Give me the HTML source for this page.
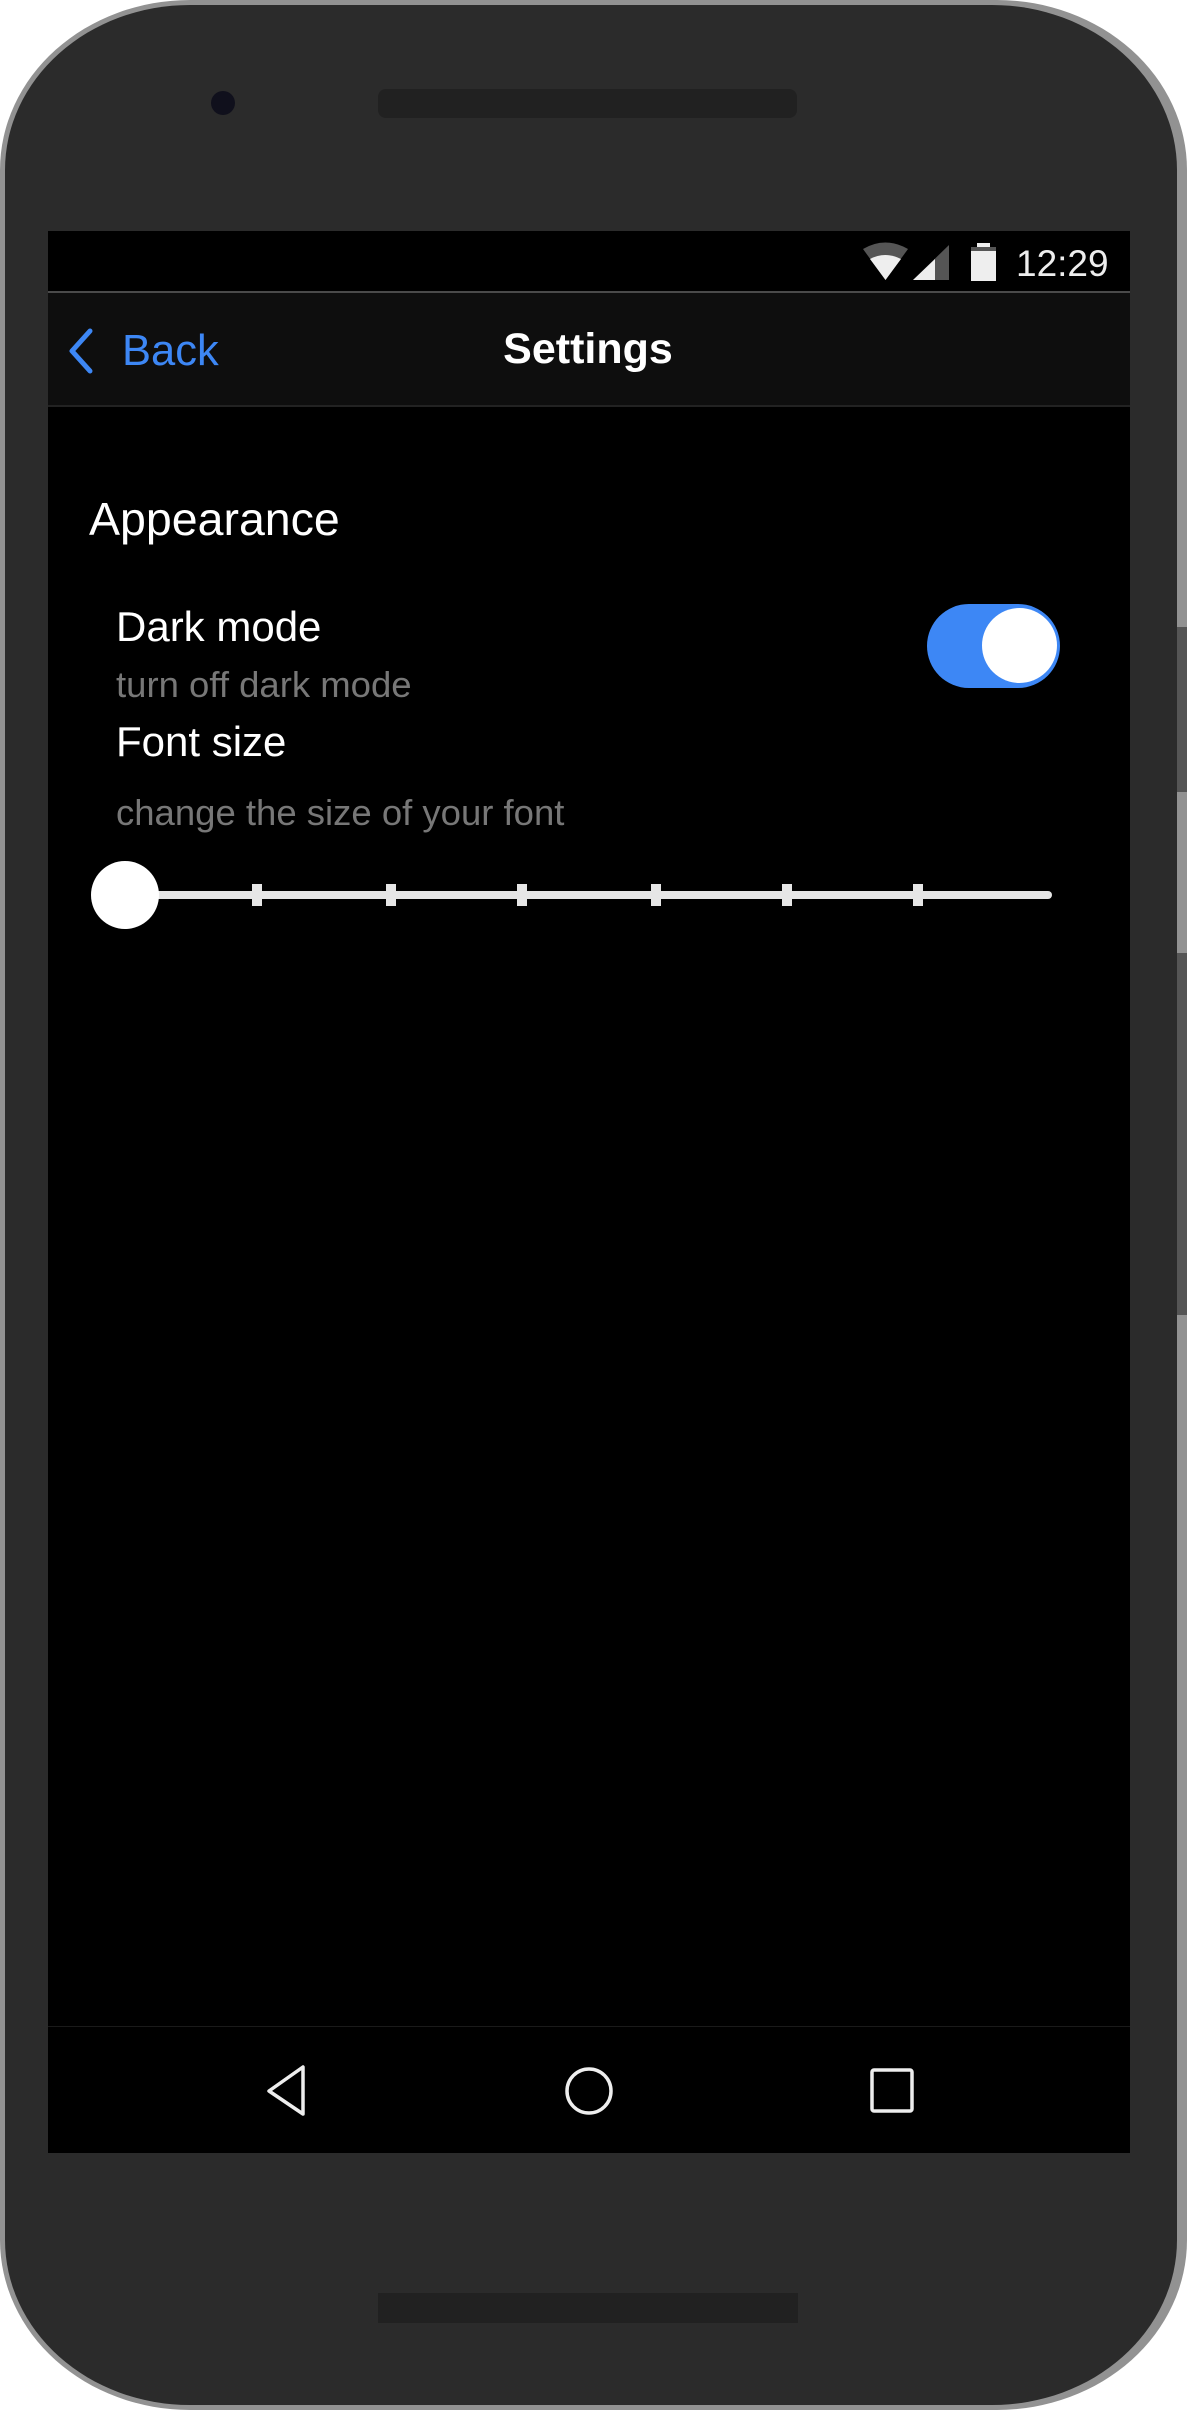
<!DOCTYPE html>
<html><head><meta charset="utf-8"><style>
*{margin:0;padding:0;box-sizing:border-box}
body{width:1187px;height:2410px;background:#fff;position:relative;overflow:hidden;font-family:"Liberation Sans",Arial,sans-serif}
.abs{position:absolute}
.phone{left:0;top:0;width:1187px;height:2410px;background:#929292;border-radius:190px/170px}
.body{left:5px;top:5px;width:1172px;height:2400px;background:#2b2b2b;border-radius:185px/165px}
.screen{left:48px;top:231px;width:1082px;height:1922px;background:#000}
.t{position:absolute;white-space:nowrap;line-height:1}
</style></head><body>
<div class="abs phone"></div>
<div class="abs body"></div>
<div class="abs" style="left:1177px;top:627px;width:10px;height:165px;background:#555"></div>
<div class="abs" style="left:1177px;top:953px;width:10px;height:362px;background:#555"></div>
<div class="abs" style="left:378px;top:89px;width:419px;height:29px;background:#212121;border-radius:8px"></div>
<div class="abs" style="left:211px;top:91px;width:24px;height:24px;background:#10101c;border-radius:50%"></div>
<div class="abs" style="left:378px;top:2293px;width:420px;height:30px;background:#212121"></div>
<div class="abs screen"></div>
<!-- status bar -->
<div class="abs" style="left:48px;top:291px;width:1082px;height:2px;background:#4a4a4a"></div>
<svg class="abs" style="left:860px;top:240px" width="140" height="44">
<path d="M3 9 Q25 -4 48 9 L25.5 40 Z" fill="#555"/>
<path d="M10 19 Q25 11 41 19 L25.5 40 Z" fill="#eee"/>
<path d="M89 5 L89 40 L53 40 Z" fill="#555"/>
<path d="M75 19 L75 40 L53 40 Z" fill="#eee"/>
<rect x="111" y="7" width="25" height="34" fill="#eee"/>
<rect x="117" y="3" width="13" height="5" fill="#eee"/>
<rect x="111" y="7" width="25" height="4" fill="#555"/>
</svg>
<div class="t" style="left:1016px;top:245px;font-size:37px;color:#eee">12:29</div>
<!-- header -->
<div class="abs" style="left:48px;top:293px;width:1082px;height:114px;background:#0e0e0e;border-bottom:2px solid #222"></div>
<svg class="abs" style="left:64px;top:326px" width="34" height="50"><path d="M26 5 L8 25 L26 45" stroke="#3d87f5" stroke-width="5" fill="none" stroke-linecap="round" stroke-linejoin="round"/></svg>
<div class="t" style="left:122px;top:330px;font-size:43.5px;color:#3d87f5">Back</div>
<div class="t" style="left:0;width:1176px;text-align:center;top:328px;font-size:43px;color:#fff;font-weight:bold">Settings</div>
<!-- content -->
<div class="t" style="left:89px;top:496px;font-size:46.5px;color:#fff">Appearance</div>
<div class="t" style="left:116px;top:606px;font-size:42px;color:#fff">Dark mode</div>
<div class="t" style="left:116px;top:667px;font-size:36.5px;color:#777">turn off dark mode</div>
<div class="t" style="left:116px;top:721px;font-size:42px;color:#fff">Font size</div>
<div class="t" style="left:116px;top:795px;font-size:36.5px;color:#777">change the size of your font</div>
<div class="abs" style="left:927px;top:604px;width:133px;height:84px;border-radius:42px;background:#3d87f5"></div>
<div class="abs" style="left:982px;top:608px;width:75px;height:75px;border-radius:50%;background:#fff"></div>
<div class="abs" style="left:125px;top:891px;width:927px;height:8px;border-radius:4px;background:#e6e6e6"></div>
<div class="abs" style="left:252px;top:884px;width:10px;height:22px;background:#e6e6e6"></div>
<div class="abs" style="left:386px;top:884px;width:10px;height:22px;background:#e6e6e6"></div>
<div class="abs" style="left:517px;top:884px;width:10px;height:22px;background:#e6e6e6"></div>
<div class="abs" style="left:651px;top:884px;width:10px;height:22px;background:#e6e6e6"></div>
<div class="abs" style="left:782px;top:884px;width:10px;height:22px;background:#e6e6e6"></div>
<div class="abs" style="left:913px;top:884px;width:10px;height:22px;background:#e6e6e6"></div>
<div class="abs" style="left:91px;top:861px;width:68px;height:68px;border-radius:50%;background:#fff"></div>
<!-- nav -->
<div class="abs" style="left:48px;top:2026px;width:1082px;height:1px;background:#1a1a1a"></div>
<svg class="abs" style="left:258px;top:2060px" width="680" height="60">
<path d="M45 7 L45 54 L11 31 Z" stroke="#eee" stroke-width="3.5" fill="none" stroke-linejoin="round"/>
<circle cx="331" cy="31" r="22" stroke="#eee" stroke-width="3.5" fill="none"/>
<rect x="614" y="10" width="40" height="41" rx="2" stroke="#eee" stroke-width="3.5" fill="none"/>
</svg>
</body></html>
